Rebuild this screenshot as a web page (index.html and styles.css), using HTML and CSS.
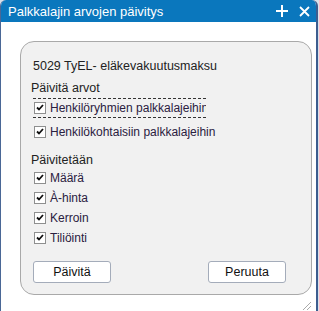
FILE: index.html
```html
<!DOCTYPE html>
<html lang="fi">
<head>
    <meta charset="UTF-8">
    <title>Palkkalajin arvojen päivitys</title>
    <link rel="stylesheet" href="styles.css">
</head>
<body>
    <div class="window">
        <div class="titlebar">
            <span class="title">Palkkalajin arvojen päivitys</span>
            <span class="tools">
                <svg width="12" height="12" viewBox="0 0 12 12"><path d="M6 0v12M0 6h12" stroke="#fff" stroke-width="2"/></svg>
                <svg width="11" height="11" viewBox="0 0 11 11"><path d="M1 1l9 9M10 1l-9 9" stroke="#fff" stroke-width="1.8"/></svg>
            </span>
        </div>
        <div class="content">
            <div class="panel">
                <div class="code">5029 TyEL- eläkevakuutusmaksu</div>

                <div class="group-title">Päivitä arvot</div>
                <label class="check focused"><span class="box"></span><span class="label">Henkilöryhmien palkkalajeihin</span></label>
                <label class="check spaced"><span class="box"></span><span class="label">Henkilökohtaisiin palkkalajeihin</span></label>

                <div class="group-title second">Päivitetään</div>
                <label class="check"><span class="box"></span><span class="label">Määrä</span></label>
                <label class="check"><span class="box"></span><span class="label">À-hinta</span></label>
                <label class="check"><span class="box"></span><span class="label">Kerroin</span></label>
                <label class="check"><span class="box"></span><span class="label">Tiliöinti</span></label>

                <div class="buttons">
                    <button>Päivitä</button>
                    <button>Peruuta</button>
                </div>
            </div>
            <div class="grip"></div>
        </div>
    </div>
</body>
</html>
```

FILE: styles.css
```css
body {
    margin: 0;
    padding: 0;
    height: 311px;
    background-color: #d9e1ea;
    font-family: 'Liberation Sans', Arial, sans-serif;
    overflow: hidden;
}
.window {
    width: 315px;
    height: 311px;
    border-left: 1px solid #4a6796;
    border-right: 2px solid #3d5d8f;
    border-radius: 6px 6px 0 0;
    background: #fff;
    overflow: hidden;
}
.titlebar {
    height: 22px;
    background-color: #0a77bd;
    color: #fff;
    display: flex;
    align-items: center;
    justify-content: space-between;
    padding: 0 6px 0 7px;
}
.title {
    font-size: 13px;
}
.tools {
    display: flex;
    align-items: center;
    gap: 11px;
}
.content {
    position: relative;
    box-sizing: border-box;
    padding: 19px 0 0 19px;
    height: 289px;
}
.panel {
    width: 278px;
    height: 252px;
    border: 1px solid #a9a9a9;
    border-radius: 14px;
    background-color: #f1f1f1;
    padding: 0 0 0 12px;
    font-size: 12.5px;
    color: #222;
    display: flex;
    flex-direction: column;
    align-items: flex-start;
}
.code {
    margin-top: 16px;
    height: 16px;
    line-height: 16px;
}
.group-title {
    margin-top: 6px;
    margin-left: -2px;
    height: 16px;
    line-height: 16px;
}
.group-title.second {
    margin-top: 10px;
}
.check {
    display: flex;
    align-items: center;
    gap: 4px;
    height: 18px;
    padding: 0 1px;
    border-top: 1px solid transparent;
    border-bottom: 1px solid transparent;
    font-size: 12px;
    color: #2a2040;
    white-space: nowrap;
}
.check.focused {
    margin-top: 2px;
    border-top: 1px dashed #333;
    border-bottom: 1px dashed #333;
    box-sizing: border-box;
    height: 20px;
    width: 173px;
    overflow: hidden;
}
.check.spaced {
    margin-top: 4px;
}
.box {
    flex: none;
    width: 10px;
    height: 10px;
    border: 1px solid #8e8f8f;
    background: #fff url("data:image/svg+xml;utf8,<svg xmlns='http://www.w3.org/2000/svg' width='10' height='10'><path d='M2 4.5l2 2 4-4.5' fill='none' stroke='%23111' stroke-width='1.8'/></svg>") no-repeat center;
}
.buttons {
    margin-top: 13px;
    display: flex;
    justify-content: space-between;
    width: 253px;
}
button {
    width: 78px;
    height: 22px;
    background: #fff;
    border: 1px solid #a4acba;
    border-radius: 3px;
    font-family: 'Liberation Sans', Arial, sans-serif;
    font-size: 12.5px;
    color: #111;
    padding: 0;
}
.grip {
    position: absolute;
    right: 5px;
    top: 280px;
    width: 8px;
    height: 8px;
    background: linear-gradient(135deg, transparent 45%, #aaa 45%, #aaa 55%, transparent 55%, transparent 70%, #aaa 70%, #aaa 80%, transparent 80%);
}
```
